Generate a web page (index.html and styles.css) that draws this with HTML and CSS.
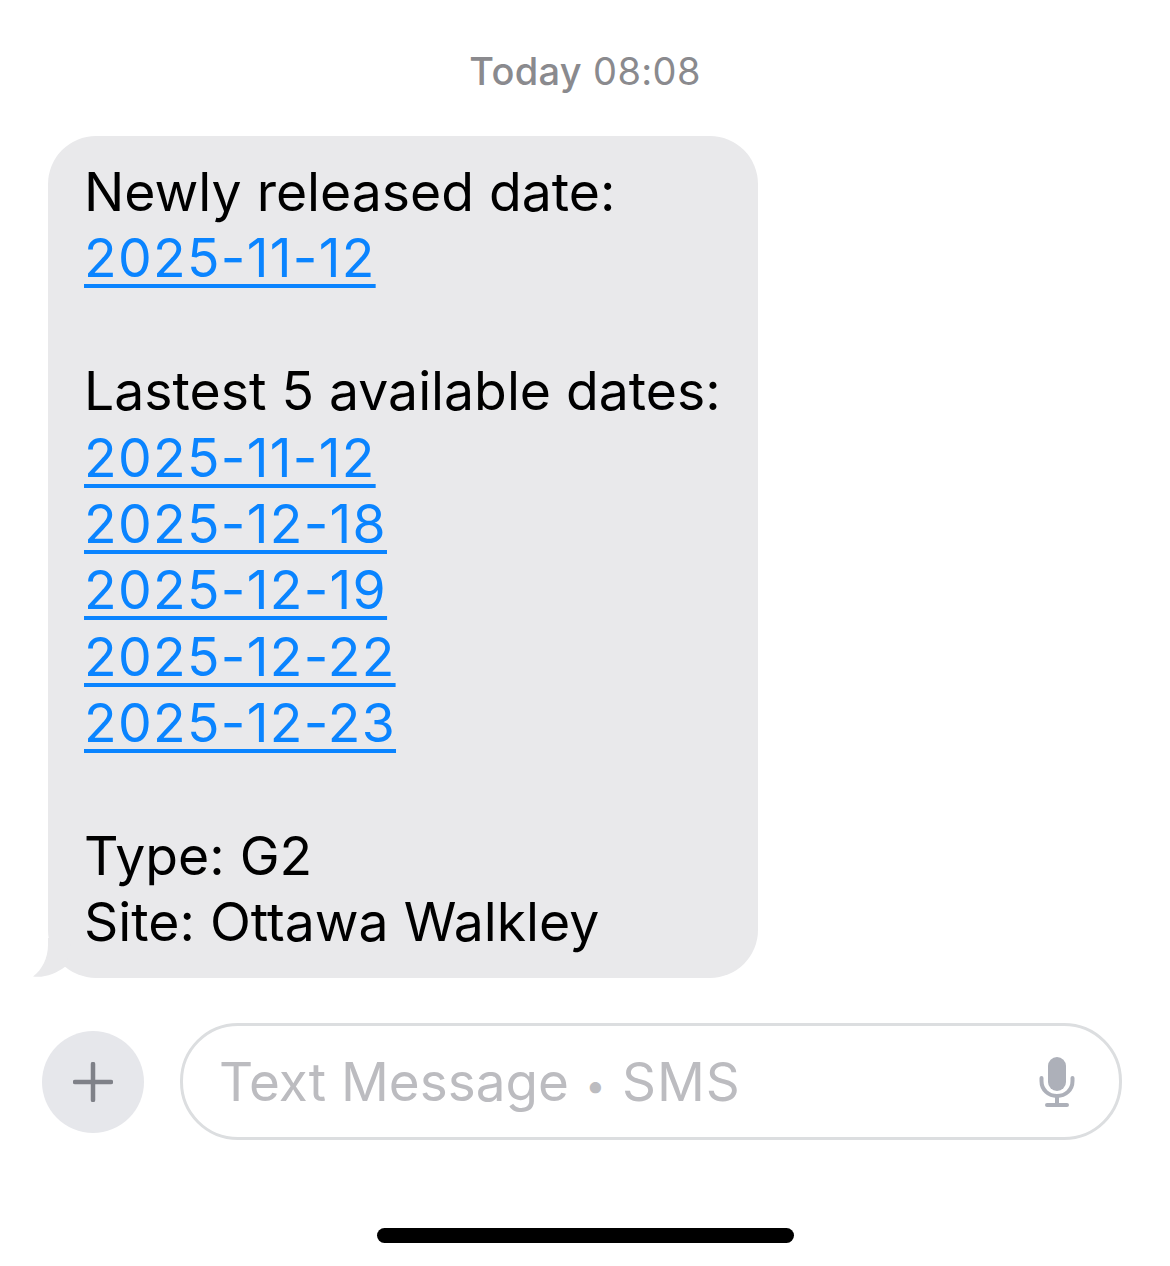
FILE: index.html
```html
<!DOCTYPE html>
<html lang="en">
<head>
    <meta charset="UTF-8">
    <title>Messages</title>
    <link rel="stylesheet" href="styles.css">
</head>
<body>
<div class="time"><b>Today</b> 08:08</div>
<div class="bubble">
    <div>Newly released date:</div>
    <div><a href="#">2025-11-12</a></div>
    <div class="blank"></div>
    <div>Lastest 5 available dates:</div>
    <div><a href="#">2025-11-12</a></div>
    <div><a href="#">2025-12-18</a></div>
    <div><a href="#">2025-12-19</a></div>
    <div><a href="#">2025-12-22</a></div>
    <div><a href="#">2025-12-23</a></div>
    <div class="blank"></div>
    <div>Type: G2</div>
    <div>Site: Ottawa Walkley</div>
    <svg class="tail" width="40" height="40" viewBox="0 0 40 40"><path d="M16 0V7C16 20 10 32 1 38.5C12 40 24 36 34 28L40 0Z" fill="#e9e9eb"/></svg>
</div>
<div class="composer">
    <div class="plus">
        <svg width="40" height="40" viewBox="0 0 40 40"><path d="M20 2V38M2 20H38" stroke="#7f8188" stroke-width="4.500" stroke-linecap="round"/></svg>
    </div>
    <div class="input">
        <span class="placeholder">Text Message <span class="dot">•</span> <span class="sms">SMS</span></span>
        <svg width="36" height="52" viewBox="0 0 36 52"><rect x="9" y="1" width="18" height="34" rx="9" fill="#adb0b9"/><path d="M2.500 22v3c0 9 7 15 15.500 15s15.500-6 15.500-15v-3M18 40v8M8 49h20" fill="none" stroke="#adb0b9" stroke-width="4" stroke-linecap="round"/></svg>
    </div>
</div>
<div class="home-wrap"><div class="home"></div></div>
</body>
</html>
```
FILE: styles.css
```css
body{
    margin: 0;
    height: 1266px;
    background: #fff;
    font-family: "Inter", "Liberation Sans", sans-serif;
    overflow: hidden;
}
.time{
    height: 136px;
    box-sizing: border-box;
    padding-top: 50px;
    text-align: center;
    font-size: 38px;
    line-height: 42px;
    letter-spacing: 0.35px;
    color: #8a8a8e;
}
.time b{
    font-weight: 500;
}
.bubble{
    position: relative;
    width: 710px;
    height: 842px;
    box-sizing: border-box;
    margin-left: 48px;
    padding: 23px 0 0 36px;
    background: #e9e9eb;
    border-radius: 48px;
    font-size: 53.5px;
    line-height: 66.4px;
    color: #000;
}
.blank{
    height: 66.4px;
}
.bubble a{
    margin-left: -2px;
    padding: 0 2px;
    letter-spacing: 1.3px;
    color: #0a84ff;
    text-decoration-thickness: 4px;
    text-underline-offset: 7px;
    text-decoration-skip-ink: none;
}
.tail{
    position: absolute;
    left: -16px;
    bottom: 0;
}
.composer{
    display: flex;
    align-items: center;
    margin: 45px 48px 0 42px;
    gap: 36px;
}
.plus{
    display: flex;
    align-items: center;
    justify-content: center;
    width: 102px;
    height: 102px;
    border-radius: 50%;
    background: #e6e7eb;
}
.input{
    flex: 1;
    display: flex;
    align-items: center;
    justify-content: space-between;
    height: 117px;
    box-sizing: border-box;
    padding: 0 44px 0 36px;
    border: 3px solid #dcdee0;
    border-radius: 58px;
}
.placeholder{
    font-size: 53px;
    color: #bcbcc0;
}
.dot{
    margin: 0 1.500px;
    font-size: 36px;
    vertical-align: 3px;
}
.sms{
    letter-spacing: 1px;
}
.home-wrap{
    display: flex;
    justify-content: center;
    margin-top: 88px;
}
.home{
    width: 417px;
    height: 15px;
    border-radius: 8px;
    background: #000;
}
```
